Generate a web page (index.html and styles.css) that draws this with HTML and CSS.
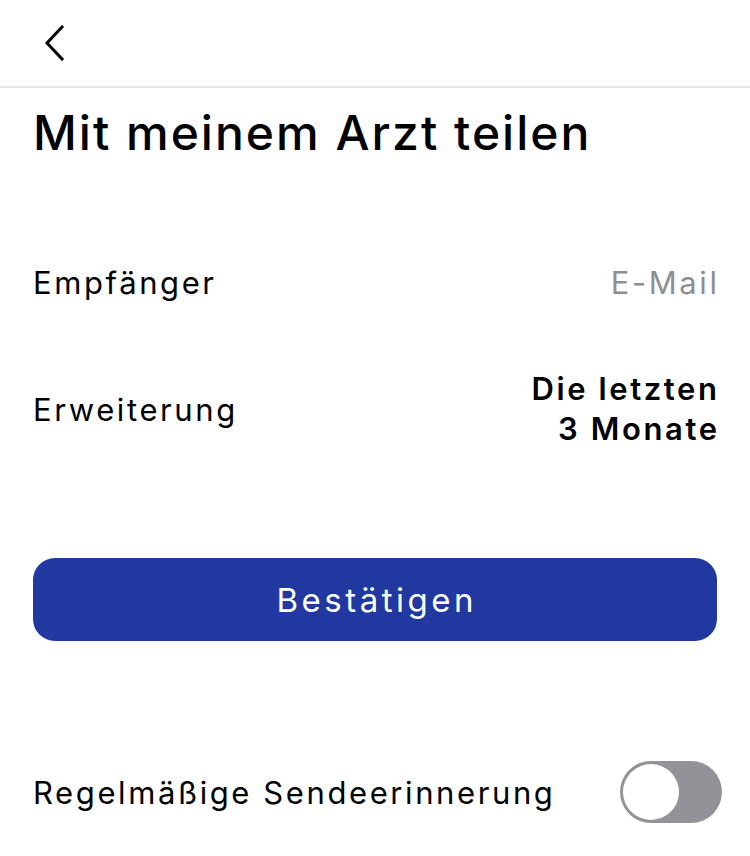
FILE: index.html
```html
<!DOCTYPE html>
<html>
<head>
    <title>Mit meinem Arzt teilen</title>
    <link rel="stylesheet" href="styles.css">
</head>
<body>
    <div class="topbar">
        <button class="back" aria-label="Zurück">
            <svg width="22" height="36" viewBox="0 0 22 36">
                <path d="M18 2 L3 18 L18 34" fill="none" stroke="#000" stroke-width="3" stroke-linecap="square"/>
            </svg>
        </button>
    </div>

    <div class="content">
        <h1>Mit meinem Arzt teilen</h1>

        <div class="row row-recipient">
            <span class="label">Empfänger</span>
            <span class="value muted">E-Mail</span>
        </div>
        <div class="row row-range">
            <span class="label">Erweiterung</span>
            <span class="value strong">Die letzten<br>3 Monate</span>
        </div>

        <button class="confirm">Bestätigen</button>

        <div class="row row-reminder">
            <span class="label">Regelmäßige Sendeerinnerung</span>
            <span class="switch"><span class="knob"></span></span>
        </div>
    </div>
</body>
</html>
```

FILE: styles.css
```css
/* base */
body {
    margin: 0;
    background: #fff;
    color: #000;
    font-family: "Inter", "Liberation Sans", sans-serif;
}

/* top navigation bar */
.topbar {
    height: 86px;
    border-bottom: 2px solid #e5e5ea;
    display: flex;
    align-items: center;
    padding-left: 44px;
}

.back {
    background: none;
    border: none;
    padding: 0;
    display: flex;
}

/* page content */
.content {
    padding: 0 33px;
}

h1 {
    margin: 18px 0 0;
    font-size: 48px;
    font-weight: 500;
    line-height: 54px;
    letter-spacing: 2px;
}

.row {
    display: flex;
    justify-content: space-between;
    align-items: center;
    font-size: 31px;
    letter-spacing: 2.6px;
}

.row-recipient {
    height: 60px;
    margin-top: 92px;
}

.row-range {
    height: 80px;
    margin-top: 57px;
}

.value {
    text-align: right;
    margin-right: -2.6px;
}

.muted {
    color: #8e8e93;
}

.strong {
    font-weight: 600;
    line-height: 40px;
}

/* confirm button */
.confirm {
    display: block;
    width: 100%;
    height: 83px;
    margin-top: 109px;
    padding: 0 0 0 3.5px;
    border: none;
    border-radius: 22px;
    background: #20389f;
    color: #fff;
    font-family: inherit;
    font-size: 33px;
    letter-spacing: 3.5px;
}

/* reminder switch */
.row-reminder {
    height: 62px;
    margin-top: 120px;
}

.switch {
    width: 102px;
    height: 62px;
    border-radius: 31px;
    background: #929297;
    margin-right: -5px;
    display: flex;
    align-items: center;
    padding-left: 3px;
    box-sizing: border-box;
}

.knob {
    width: 56px;
    height: 56px;
    border-radius: 50%;
    background: #fff;
}
```
